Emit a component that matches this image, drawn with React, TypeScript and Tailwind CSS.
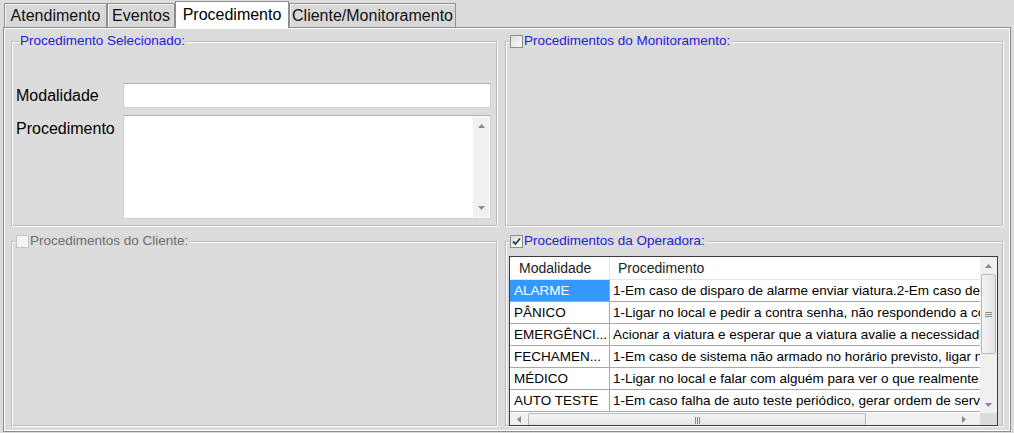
import React from "react";

const rows = [
  { mod: "ALARME", proc: "1-Em caso de disparo de alarme enviar viatura.2-Em caso de disparo" },
  { mod: "PÂNICO", proc: "1-Ligar no local e pedir a contra senha, não respondendo a contra senha" },
  { mod: "EMERGÊNCI...", proc: "Acionar a viatura e esperar que a viatura avalie a necessidade de chamar" },
  { mod: "FECHAMEN...", proc: "1-Em caso de sistema não armado no horário previsto, ligar no local" },
  { mod: "MÉDICO", proc: "1-Ligar no local e falar com alguém para ver o que realmente está" },
  { mod: "AUTO TESTE", proc: "1-Em caso falha de auto teste periódico, gerar ordem de serviço" },
];

function Arrow({ dir }: { dir: "up" | "down" | "left" | "right" }) {
  const pts = {
    up: "0,4 3.5,0 7,4",
    down: "0,0 3.5,4 7,0",
    left: "4,0 0,3.5 4,7",
    right: "0,0 4,3.5 0,7",
  }[dir];
  const vert = dir === "up" || dir === "down";
  return (
    <svg width={vert ? 7 : 4} height={vert ? 4 : 7} viewBox={vert ? "0 0 7 4" : "0 0 4 7"}>
      <polygon points={pts} fill="#8a8a8a" />
    </svg>
  );
}

function CheckBox({ checked, disabled }: { checked?: boolean; disabled?: boolean }) {
  return (
    <div
      className={
        "w-[13px] h-[13px] border flex items-center justify-center " +
        (disabled
          ? "border-[#c6c6c6] bg-[#f4f4f4]"
          : "border-[#8e8f8f] bg-gradient-to-br from-[#dcdcdc] to-[#fbfbfb]")
      }
    >
      {checked && (
        <svg width="9" height="9" viewBox="0 0 9 9">
          <path d="M1 4.5 L3.5 7 L8 1.5" stroke="#2c3a5c" strokeWidth="1.8" fill="none" />
        </svg>
      )}
    </div>
  );
}

function GroupBox({
  title,
  check,
  checked,
  disabled,
  children,
}: {
  title: string;
  check?: boolean;
  checked?: boolean;
  disabled?: boolean;
  children?: React.ReactNode;
}) {
  return (
    <div className="relative border border-[#bcbcbc] shadow-[inset_1px_1px_0_#fff,1px_1px_0_#fff] flex flex-col min-h-0">
      <div
        className={
          "absolute -top-[9px] h-[16px] flex items-center gap-[1px] bg-[#dcdcdc] pr-[1px] text-[13.5px] leading-[16px] " +
          (check ? "left-[4px]" : "left-[7px] pl-[1px]")
        }
      >
        {check && <CheckBox checked={checked} disabled={disabled} />}
        <span className={disabled ? "text-[#6d6d6d]" : "text-[#2222cc]"}>{title}</span>
      </div>
      {children}
    </div>
  );
}

export default function App() {
  const tabs = [
    { label: "Atendimento", w: "w-[103px]" },
    { label: "Eventos", w: "w-[68px]" },
    { label: "Procedimento", w: "w-[114px]", active: true },
    { label: "Cliente/Monitoramento", w: "w-[167px]" },
  ];

  return (
    <div className="w-[1014px] h-[433px] bg-[#dcdcdc] overflow-hidden text-black font-['Liberation_Sans',Arial,sans-serif]">
      {/* tab strip */}
      <div className="h-[27px] flex items-end pl-[4px]">
        {tabs.map((t) =>
          t.active ? (
            <div
              key={t.label}
              className={`${t.w} h-[27px] -mb-px relative z-10 bg-white border border-b-0 border-[#8c8c8c] flex justify-center pt-[4px] text-[16px] leading-[18px]`}
            >
              {t.label}
            </div>
          ) : (
            <div
              key={t.label}
              className={`${t.w} h-[24px] bg-[#d8d8d8] border border-b-0 border-[#8f8f8f] shadow-[inset_1px_1px_0_#f2f2f2] flex justify-center pt-[3px] text-[16px] leading-[18px] text-[#111]`}
            >
              {t.label}
            </div>
          )
        )}
      </div>

      {/* panel */}
      <div className="ml-[3px] w-[1008px] h-[405px] border border-[#8c8c8c] shadow-[inset_0_0_0_1px_#fff] grid grid-cols-[486px_498px] grid-rows-[185px_185px] gap-x-[8px] gap-y-[15px] pt-[13px] pl-[7px]">
        <GroupBox title="Procedimento Selecionado:">
          <div className="flex flex-col pt-[41px] pl-[4px] pr-[5px]">
            <div className="flex items-center">
              <div className="w-[107px] text-[16px] leading-[18px] pt-[1px]">Modalidade</div>
              <div className="flex-1 h-[25px] bg-white border border-[#d0d0d0] border-t-[#b0b0b0]" />
            </div>
            <div className="flex mt-[7px]">
              <div className="w-[107px] text-[16px] leading-[18px] pt-[5px]">Procedimento</div>
              <div className="flex-1 h-[104px] bg-white border border-[#d0d0d0] border-t-[#b0b0b0] flex justify-end p-[1px]">
                <div className="w-[16px] bg-[#f0f0f0] flex flex-col items-center justify-between py-[7px]">
                  <Arrow dir="up" />
                  <Arrow dir="down" />
                </div>
              </div>
            </div>
          </div>
        </GroupBox>

        <GroupBox title="Procedimentos do Monitoramento:" check />

        <GroupBox title="Procedimentos do Cliente:" check disabled />

        <GroupBox title="Procedimentos da Operadora:" check checked>
          <div className="mt-[14px] ml-[3px] mr-[4px] -mb-[2px] h-[170px] border border-[#3a3a3a] bg-white flex flex-col text-[13.5px] leading-[16px]">
            <div className="flex flex-1 min-h-0">
              <div className="flex-1 min-w-0 flex flex-col">
                <div className="h-[23px] flex items-center border-b border-[#e3e3e3] text-[#222] text-[14px]">
                  <div className="w-[100px] pl-[9px] border-r border-[#e6e6e6] h-full flex items-center">Modalidade</div>
                  <div className="pl-[8px]">Procedimento</div>
                </div>
                {rows.map((r, i) => (
                  <div key={r.mod} className="h-[22px] flex border-b border-[#a8a8a8]">
                    <div
                      className={
                        "w-[100px] shrink-0 pl-[4px] flex items-center whitespace-nowrap overflow-hidden border-r border-[#a8a8a8] " +
                        (i === 0 ? "bg-[#3399ff] text-white" : "")
                      }
                    >
                      {r.mod}
                    </div>
                    <div className="flex-1 min-w-0 pl-[3px] flex items-center whitespace-nowrap overflow-hidden">
                      {r.proc}
                    </div>
                  </div>
                ))}
              </div>
              {/* vertical scrollbar */}
              <div className="w-[17px] bg-[#f0f0f0] flex flex-col items-center">
                <div className="h-[17px] flex items-center justify-center">
                  <Arrow dir="up" />
                </div>
                <div className="w-[15px] h-[80px] border border-[#b8b8b8] rounded-[2px] bg-gradient-to-r from-[#f3f3f3] to-[#e3e3e3] flex items-center justify-center">
                  <svg width="7" height="5" viewBox="0 0 7 5">
                    <path d="M0 0.5H7M0 2.5H7M0 4.5H7" stroke="#8a8a8a" strokeWidth="1" />
                  </svg>
                </div>
                <div className="flex-1" />
                <div className="h-[17px] flex items-center justify-center">
                  <Arrow dir="down" />
                </div>
              </div>
            </div>
            {/* horizontal scrollbar */}
            <div className="h-[12px] flex bg-[#f0f0f0] overflow-hidden">
              <div className="w-[18px] flex items-start justify-center pt-[3px]">
                <Arrow dir="left" />
              </div>
              <div className="w-[338px] h-[15px] border border-[#b8b8b8] rounded-[2px] bg-gradient-to-b from-[#f3f3f3] to-[#e3e3e3] flex justify-center pt-[3px]">
                <svg width="5" height="7" viewBox="0 0 5 7">
                  <path d="M0.5 0V7M2.5 0V7M4.5 0V7" stroke="#8a8a8a" strokeWidth="1" />
                </svg>
              </div>
              <div className="flex-1" />
              <div className="w-[32px] flex items-start justify-center pt-[3px]">
                <Arrow dir="right" />
              </div>
              <div className="w-[17px] bg-[#dcdcdc]" />
            </div>
          </div>
        </GroupBox>
      </div>
    </div>
  );
}
